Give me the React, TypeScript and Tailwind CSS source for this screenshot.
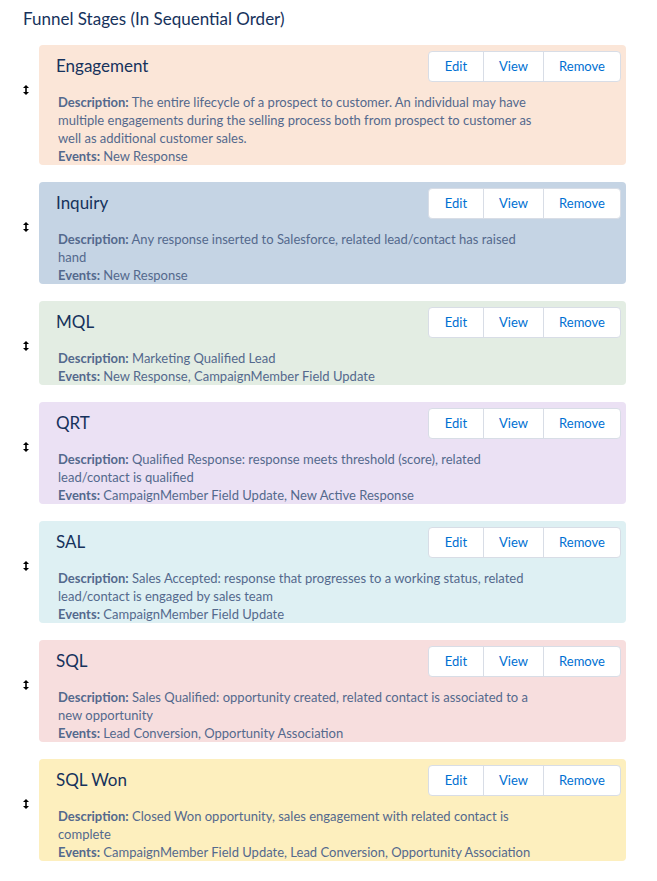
import { Fragment } from 'react'

type Stage = {
  name: string
  bg: string
  description: string[]
  events: string
}

const stages: Stage[] = [
  {
    name: 'Engagement',
    bg: 'bg-[#fbe6d8]',
    description: [
      'The entire lifecycle of a prospect to customer. An individual may have',
      'multiple engagements during the selling process both from prospect to customer as',
      'well as additional customer sales.'
    ],
    events: 'New Response'
  },
  {
    name: 'Inquiry',
    bg: 'bg-[#c5d4e4]',
    description: [
      'Any response inserted to Salesforce, related lead/contact has raised',
      'hand'
    ],
    events: 'New Response'
  },
  {
    name: 'MQL',
    bg: 'bg-[#e3ede3]',
    description: ['Marketing Qualified Lead'],
    events: 'New Response, CampaignMember Field Update'
  },
  {
    name: 'QRT',
    bg: 'bg-[#ebe1f4]',
    description: [
      'Qualified Response: response meets threshold (score), related',
      'lead/contact is qualified'
    ],
    events: 'CampaignMember Field Update, New Active Response'
  },
  {
    name: 'SAL',
    bg: 'bg-[#def0f3]',
    description: [
      'Sales Accepted: response that progresses to a working status, related',
      'lead/contact is engaged by sales team'
    ],
    events: 'CampaignMember Field Update'
  },
  {
    name: 'SQL',
    bg: 'bg-[#f7dede]',
    description: [
      'Sales Qualified: opportunity created, related contact is associated to a',
      'new opportunity'
    ],
    events: 'Lead Conversion, Opportunity Association'
  },
  {
    name: 'SQL Won',
    bg: 'bg-[#fdefbe]',
    description: [
      'Closed Won opportunity, sales engagement with related contact is',
      'complete'
    ],
    events: 'CampaignMember Field Update, Lead Conversion, Opportunity Association'
  }
]

function DragHandle() {
  return (
    <svg width="6" height="10" viewBox="0 0 6 10" className="block">
      <path d="M3 0 L6 3 L0 3 Z" fill="#000" />
      <rect x="2.2" y="2.5" width="1.6" height="5" fill="#000" />
      <path d="M3 10 L6 7 L0 7 Z" fill="#000" />
    </svg>
  )
}

function StageCard({ stage }: { stage: Stage }) {
  return (
    <div className="flex items-start">
      {/* Drag handle */}
      <div className="w-[16px] pt-[40px]">
        <DragHandle />
      </div>

      <div className={`w-[587px] rounded ${stage.bg} pt-[6px] pr-[5px] pl-[17px]`}>
        <div className="flex items-center justify-between h-[31px]">
          <h3 className="text-[17px] text-[#16325c] leading-5 -mt-[2px]">{stage.name}</h3>
          <div className="flex bg-white border border-[#d8dde6] rounded h-[31px] text-[13px] text-[#0070d2]">
            <button className="w-[54px] flex items-center justify-center">Edit</button>
            <button className="w-[60px] flex items-center justify-center border-l border-[#d8dde6]">
              View
            </button>
            <button className="w-[77px] flex items-center justify-center border-l border-[#d8dde6]">
              Remove
            </button>
          </div>
        </div>

        <div className="mt-[11px] pl-[2px] text-[13px] leading-[18px] text-[#54698d] whitespace-nowrap">
          <div>
            <span className="font-bold">Description:</span>{' '}
            {stage.description.map((line, i) => (
              <Fragment key={i}>
                {i > 0 && <br />}
                {line}
              </Fragment>
            ))}
          </div>
          <div>
            <span className="font-bold">Events:</span> {stage.events}
          </div>
        </div>
      </div>
    </div>
  )
}

export default function App() {
  return (
    <div className="min-h-screen bg-white px-[23px] pt-[7px] font-['Lato','Open_Sans',sans-serif]">
      <h2 className="text-[17px] leading-6 text-[#16325c]">Funnel Stages (In Sequential Order)</h2>
      <div className="mt-[14px] flex flex-col gap-[17px]">
        {stages.map(stage => (
          <StageCard key={stage.name} stage={stage} />
        ))}
      </div>
    </div>
  )
}
